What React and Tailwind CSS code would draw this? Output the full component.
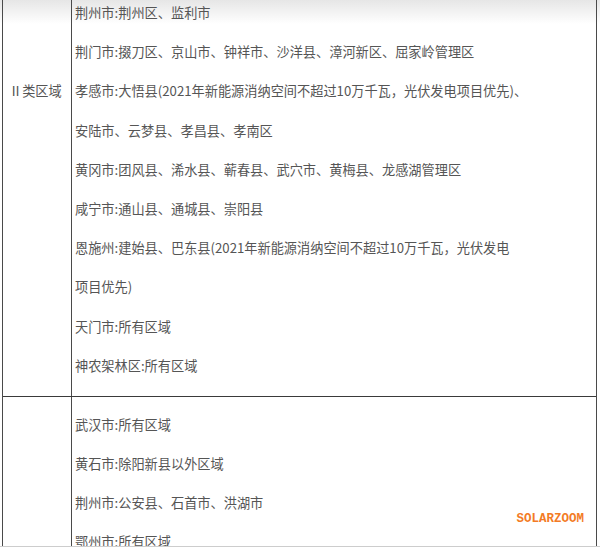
export default function App() {
  const upper = [
    '荆州市:荆州区、监利市',
    '荆门市:掇刀区、京山市、钟祥市、沙洋县、漳河新区、屈家岭管理区',
    '孝感市:大悟县(2021年新能源消纳空间不超过10万千瓦，光伏发电项目优先)、',
    '安陆市、云梦县、孝昌县、孝南区',
    '黄冈市:团风县、浠水县、蕲春县、武穴市、黄梅县、龙感湖管理区',
    '咸宁市:通山县、通城县、崇阳县',
    '恩施州:建始县、巴东县(2021年新能源消纳空间不超过10万千瓦，光伏发电',
    '项目优先)',
    '天门市:所有区域',
    '神农架林区:所有区域',
  ];
  const lower = ['武汉市:所有区域', '黄石市:除阳新县以外区域', '荆州市:公安县、石首市、洪湖市', '鄂州市:所有区域'];

  return (
    <div
      className="relative h-[553px] w-[600px] overflow-hidden bg-white text-[13.2px] text-[#555]"
      style={{ fontFamily: '"Noto Sans CJK SC", "Noto Sans", sans-serif' }}
    >
      <div className="h-[547px] overflow-hidden border-b border-[#cdcdcd] bg-[linear-gradient(to_bottom,#e6e6e6,#ffffff_24px)]">
        <div className="ml-[2px] w-[595px] border-x border-[#4a4a4a]">
          {/* Ⅱ类区域 */}
          <div className="-mt-[7px] flex border-b border-[#3a3a3a]">
            <div className="w-[69px] shrink-0 border-r border-[#4a4a4a] pl-[6px] pt-[78px] leading-[39px]">
              Ⅱ类区域
            </div>
            <div className="flex-1 pb-[11px] pl-[3px]">
              {upper.map((t) => (
                <p key={t} className="whitespace-nowrap leading-[39.2px]">{t}</p>
              ))}
            </div>
          </div>
          {/* next row */}
          <div className="flex">
            <div className="w-[69px] shrink-0 border-r border-[#4a4a4a]" />
            <div className="relative flex-1 pl-[3px] pt-[8px]">
              {lower.map((t) => (
                <p key={t} className="whitespace-nowrap leading-[39px]">{t}</p>
              ))}
              <span
                className="absolute right-[12px] top-[113px] text-[12.5px] font-bold text-[#f37b25]"
                style={{ fontFamily: '"Liberation Mono", monospace' }}
              >
                SOLARZOOM
              </span>
            </div>
          </div>
        </div>
      </div>
    </div>
  );
}
